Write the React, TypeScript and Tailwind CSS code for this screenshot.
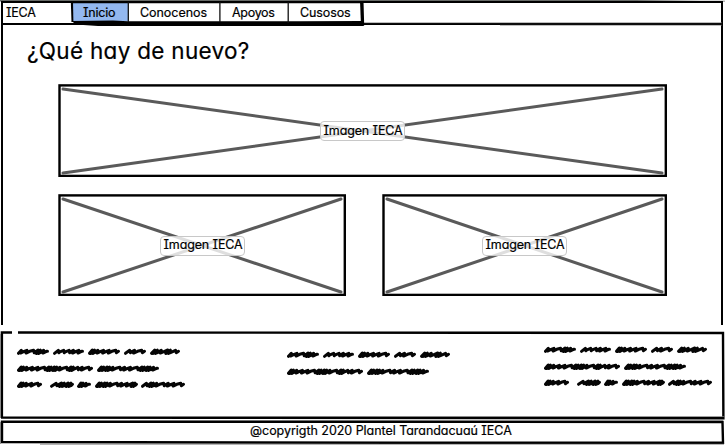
import React from "react";

const SKETCH =
  "font-[Inter,'Noto_Sans',sans-serif] [font-feature-settings:'cv11','cv08'] [-webkit-text-stroke:0.2px_#000] text-black whitespace-nowrap";

function ImageBox({ w, h, className, label }: { w: number; h: number; className: string; label: string }) {
  return (
    <div className={`relative shrink-0 ${className}`}>
      <svg className="block" width={w} height={h} viewBox={`0 0 ${w} ${h}`}>
        <rect x="1.5" y="1.4" width={w - 2.7} height={h - 2.5} fill="none" stroke="#000" strokeWidth="2.4" />
        <path
          d={`M5 5L${w - 5} ${h - 4}M5 ${h - 4}L${w - 5} 5`}
          stroke="#5a5a5a"
          strokeWidth="3"
          strokeLinecap="round"
        />
      </svg>
      <span className={label}>Imagen IECA</span>
    </div>
  );
}

// Each word is [start, end, rhythm]; "u" keeps the pen low, "r" arches, "m" is a tight double stroke.
type Word = [number, number, string];
const LINES: Word[][] = [
  [[0, 32, "uurmu"], [36, 67, "rrruu"], [71, 103, "muuur"], [107, 129, "rur"], [133, 163, "mumr"]],
  [[0, 76, "muuurmmurmrur"], [80, 142, "mmuruurmmu"]],
  [[0, 25, "muur"], [33, 57, "rmm"], [60, 74, "mu"], [78, 121, "mmuruum"], [124, 168, "rmuruur"]],
];

function scribble([a, b, rhythm]: Word, y: number) {
  const step = (b - a - 4) / rhythm.length;
  let d = `M${a + 1.5} ${y + 1.8}`;
  rhythm.split("").forEach((c, i) => {
    const x = a + 1.5 + i * step;
    if (c === "r") {
      d += `L${x + step * 0.7} ${y - 1.2}L${x + step * 0.8} ${y + 1.2}L${x + step} ${y + 0.4}`;
    } else if (c === "u") {
      d += `L${x + step * 0.5} ${y - 1.2}L${x + step * 0.35} ${y + 1.6}L${x + step} ${y - 0.2}`;
    } else {
      d += `L${x + step * 0.5} ${y - 1.5}L${x + step * 0.2} ${y + 2}L${x + step * 0.9} ${y - 1.3}L${x + step * 0.6} ${y + 2}L${x + step} ${y + 0.8}`;
    }
  });
  return d + `L${b - 1.5} ${y - 0.2}`;
}

function Scribbles({ rows }: { rows: number }) {
  const ys = [4.5, 21.5, 37.5];
  return (
    <svg className="block shrink-0" width="170" height="44" viewBox="0 0 170 44">
      {LINES.slice(0, rows).map((line, r) =>
        line.map((word, i) => (
          <path
            key={`${r}-${i}`}
            d={scribble(word, ys[r])}
            fill="none"
            stroke="#050505"
            strokeWidth="3"
            strokeLinecap="round"
            strokeLinejoin="round"
          />
        ))
      )}
    </svg>
  );
}

const labelBase =
  "absolute flex items-center justify-center h-5 w-[85px] rounded-[4px] border border-[#c8c8c8] bg-white/80 text-[12.5px] leading-none tracking-[-0.12px] pl-px";

export default function App() {
  return (
    <div className={`flex h-[445px] w-[725px] flex-col overflow-hidden bg-white ${SKETCH}`}>
      <header className="relative flex h-[26px] shrink-0 text-[12.5px] leading-none">
        <svg className="absolute inset-0" width="725" height="26" viewBox="0 0 725 26">
          <path d="M0 0H635L700 .8H725V1.5H0Z" fill="#686b68" />
          <path d="M1 2H723" stroke="#000" strokeWidth="2" />
          <path d="M2 1V26M722 1V26" stroke="#000" strokeWidth="2" />
          <path d="M1 24L364 24L722 24" stroke="#000" strokeWidth="2" />
          <path d="M364 22.7H722M500 25.3H722" stroke="#777" strokeWidth=".6" />
          <path d="M72 3H128V21L73 22Z" fill="#93b8f0" />
          <path d="M70.8 1H73L73.4 22H71.5Z" fill="#000" />
          <path d="M360 1H363.5L364.2 25.6H361Z" fill="#000" />
          <path d="M71.5 21L113 20.6L128 21.2H288L300 21.3L361 21L364 26H98L76 24.5Z" fill="#000" />
          <path d="M71 2.2H363" stroke="#000" strokeWidth="2" />
          <path d="M128.3 2V22M219.9 2V22M288.2 2V23" stroke="#111" strokeWidth="1.3" />
        </svg>
        <span className="relative w-[71px] pl-1.5 pt-[7px] tracking-[-0.25px]">IECA</span>
        <nav className="relative flex">
          <span className="w-[57px] pl-3 pt-[7px] tracking-[-0.2px]">Inicio</span>
          <span className="w-[92px] pl-3 pt-[7px] tracking-[-0.05px]">Conocenos</span>
          <span className="w-[68px] pl-3 pt-[7px] tracking-[-0.3px]">Apoyos</span>
          <span className="w-[74px] pl-3 pt-[7px] tracking-[-0.1px]">Cusosos</span>
        </nav>
      </header>

      <main className="ml-px mr-[2px] flex h-[299px] shrink-0 flex-col border-l-2 border-r-2 border-black">
        <h1 className="ml-6 mt-[13px] h-[32px] text-[22.5px] font-normal leading-6 tracking-[0.3px]">
          ¿Qué hay de nuevo?
        </h1>
        <div className="ml-[55px] mt-[13px]">
          <ImageBox w={609} h={93} className="w-[609px]" label={`${labelBase} left-[262px] top-[37px] pt-px`} />
        </div>
        <div className="ml-[55px] mt-[17px] flex gap-9">
          <ImageBox w={288} h={102} className="w-[288px]" label={`${labelBase} left-[102px] top-[42px] pb-px`} />
          <ImageBox w={285} h={102} className="w-[285px]" label={`${labelBase} left-[100px] top-[42px] pb-px`} />
        </div>
      </main>

      <footer className="mt-[6px] flex flex-col">
        <section className="relative flex h-[89px]">
          <svg className="absolute inset-0" width="725" height="89" viewBox="0 0 725 89">
            <path d="M1.9 87V1.5H12M18 1.5L480 1.7L723 2L723.4 87.2L200 86.7L1 86.5" fill="none" stroke="#000" strokeWidth="2.4" />
            <path d="M130 .4H610M260 85.5H725M.5 3V87" stroke="#777" strokeWidth=".7" />
          </svg>
          <div className="flex w-full">
            <div className="w-[270px] pl-[17px] pt-4"><Scribbles rows={3} /></div>
            <div className="w-[257px] pl-[17px] pt-[19px]"><Scribbles rows={2} /></div>
            <div className="w-[198px] pl-[17px] pt-[14px]"><Scribbles rows={3} /></div>
          </div>
        </section>
        <section className="relative flex h-[25px] text-[12.5px] leading-none">
          <svg className="absolute inset-0" width="725" height="25" viewBox="0 0 725 25">
            <path d="M2 1.7L400 1.8L722.5 2L723 22.8L400 22.8L2 22Z" fill="none" stroke="#000" strokeWidth="2.4" />
            <path d="M.5 2V24M40 24.2H724M130 .3H723" stroke="#666" strokeWidth=".7" />
          </svg>
          <p className="relative pl-[250px] pt-[5px] tracking-[-0.04px]">@copyrigth 2020 Plantel Tarandacuaú IECA</p>
        </section>
      </footer>
    </div>
  );
}
